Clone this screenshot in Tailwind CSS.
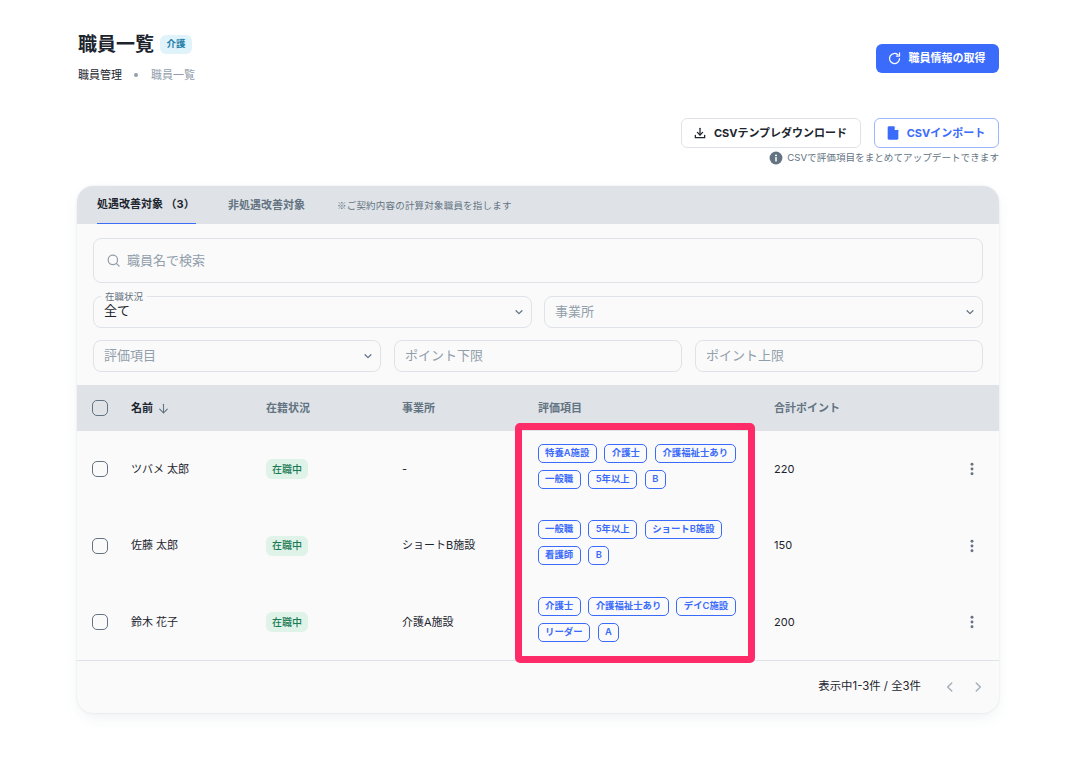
<!DOCTYPE html>
<html lang="ja">
<head>
  <meta charset="UTF-8">
  <title>職員一覧</title>
  <script src="https://cdn.jsdelivr.net/npm/@tailwindcss/browser@4"></script>
</head>
<body class="bg-white font-['Inter','Noto_Sans_CJK_JP',sans-serif] text-[#1c252e]">
  <div class="relative w-[1065px] h-[769px] overflow-hidden pl-[77px] pr-[66px] pt-[32px]">
    <!-- Header -->
    <header class="flex items-start justify-between h-[62px]">
      <div>
        <div class="flex items-center gap-[6px] h-[24px] ml-px">
          <h1 class="text-[19px] leading-[24px] pt-[2px] font-bold">職員一覧</h1>
          <span class="flex items-center justify-center w-[32px] h-[19px] rounded-[6px] bg-[#e0f3fa] text-[9.5px] font-semibold text-[#1f7fa8]">介護</span>
        </div>
        <nav class="flex items-center mt-[8px] ml-px text-[11px] leading-[22px]">
          <span class="text-[#1c252e]">職員管理</span>
          <span class="w-[4px] h-[4px] rounded-full bg-[#919eab] ml-[12px] mr-[13px]"></span>
          <span class="text-[#919eab]">職員一覧</span>
        </nav>
      </div>
      <button class="flex items-center justify-center gap-[7px] w-[123px] h-[29px] mt-[12px] pr-[3px] rounded-[6px] bg-[#3b6bfb] text-white text-[11px] font-bold">
        <svg class="w-[15px] h-[15px]" viewBox="0 0 24 24" fill="none" stroke="currentColor" stroke-width="2" stroke-linecap="round" stroke-linejoin="round"><path d="M20 12a8 8 0 1 1-2.6-5.9"/><path d="M20 3v5h-5"/></svg>
        職員情報の取得
      </button>
    </header>

    <!-- CSV actions -->
    <div class="flex justify-end gap-[13px] mt-[24px]">
      <button class="flex items-center justify-center gap-[7px] w-[180px] h-[30px] pr-[2px] rounded-[6px] border border-[#dfe3e8] bg-white text-[11px] font-bold">
        <svg class="w-[14px] h-[14px]" viewBox="0 0 24 24" fill="none" stroke="currentColor" stroke-width="2.2" stroke-linecap="round" stroke-linejoin="round"><path d="M12 4v11"/><path d="M7.5 11l4.5 4.5 4.5-4.5"/><path d="M4 16v4h16v-4"/></svg>
        CSVテンプレダウンロード
      </button>
      <button class="flex items-center justify-center gap-[6px] w-[125px] h-[30px] pr-[3px] rounded-[6px] border border-[#9db5fd] bg-white text-[11px] font-bold text-[#3b6bfb]">
        <svg class="w-[16px] h-[16px]" viewBox="0 0 24 24" fill="currentColor"><path d="M6 2h8l6 6v12a2 2 0 0 1-2 2H6a2 2 0 0 1-2-2V4a2 2 0 0 1 2-2z"/><path d="M14.5 2v5.5H20z" fill="#fff"/></svg>
        CSVインポート
      </button>
    </div>
    <div class="flex justify-end items-center gap-[4px] h-[16px] mt-[2px] text-[9.6px] text-[#637381]">
      <svg class="w-[14px] h-[14px]" viewBox="0 0 24 24"><circle cx="12" cy="12" r="11" fill="#637381"/><rect x="10.7" y="10.5" width="2.6" height="7.5" fill="#fff"/><circle cx="12" cy="7.5" r="1.7" fill="#fff"/></svg>
      CSVで評価項目をまとめてアップデートできます
    </div>

    <!-- Card -->
    <section class="w-[922px] h-[527px] mt-[20px] rounded-[16px] bg-[#fafafa] overflow-hidden shadow-[0_0_2px_rgba(145,158,171,0.25),0_6px_16px_-4px_rgba(145,158,171,0.2)]">
      <!-- Tabs -->
      <div class="flex items-center h-[38px] bg-[#dfe3e8] pl-[20px]">
        <div class="flex items-center w-[99px] h-[38px] border-b border-[#3b6bfb] text-[11px] font-bold whitespace-nowrap">処遇改善対象 （3）</div>
        <div class="ml-[32px] text-[11px] font-bold text-[#637381]">非処遇改善対象</div>
        <div class="ml-[32px] text-[9.5px] tracking-[0.2px] text-[#637381] font-['Noto_Sans_CJK_JP',sans-serif]">※ご契約内容の計算対象職員を指します</div>
      </div>

      <!-- Filters -->
      <div class="px-[16px] pt-[14px]">
        <div class="flex items-center gap-[6px] h-[45px] px-[12px] rounded-[8px] border border-[#dfe3e8] text-[13px] text-[#919eab]">
          <svg class="w-[15px] h-[15px]" viewBox="0 0 24 24" fill="none" stroke="currentColor" stroke-width="2" stroke-linecap="round"><circle cx="11" cy="11" r="7.5"/><path d="M17 17l4 4"/></svg>
          職員名で検索
        </div>
        <div class="grid grid-cols-2 gap-[12px] mt-[13px]">
          <div class="relative flex items-center justify-between h-[32px] pl-[10px] pr-[7px] rounded-[8px] border border-[#dfe3e8] text-[13px]">
            <span class="absolute left-[7px] -top-[6px] px-[4px] bg-[#fafafa] text-[9.5px] leading-[11px] text-[#637381]">在職状況</span>
            <span class="pb-[3px]">全て</span>
            <svg class="w-[10px] h-[10px] text-[#637381]" viewBox="0 0 24 24" fill="none" stroke="currentColor" stroke-width="3" stroke-linecap="round" stroke-linejoin="round"><path d="M5 9l7 7 7-7"/></svg>
          </div>
          <div class="flex items-center justify-between h-[32px] pl-[10px] pr-[7px] rounded-[8px] border border-[#dfe3e8] text-[13px] text-[#919eab]">
            事業所
            <svg class="w-[10px] h-[10px] text-[#637381]" viewBox="0 0 24 24" fill="none" stroke="currentColor" stroke-width="3" stroke-linecap="round" stroke-linejoin="round"><path d="M5 9l7 7 7-7"/></svg>
          </div>
        </div>
        <div class="grid grid-cols-3 gap-[13px] mt-[12px]">
          <div class="flex items-center justify-between h-[32px] pl-[10px] pr-[7px] rounded-[8px] border border-[#dfe3e8] text-[13px] text-[#919eab]">
            評価項目
            <svg class="w-[10px] h-[10px] text-[#637381]" viewBox="0 0 24 24" fill="none" stroke="currentColor" stroke-width="3" stroke-linecap="round" stroke-linejoin="round"><path d="M5 9l7 7 7-7"/></svg>
          </div>
          <div class="flex items-center h-[32px] pl-[10px] rounded-[8px] border border-[#dfe3e8] text-[13px] text-[#919eab]">ポイント下限</div>
          <div class="flex items-center h-[32px] pl-[10px] rounded-[8px] border border-[#dfe3e8] text-[13px] text-[#919eab]">ポイント上限</div>
        </div>
      </div>

      <!-- Table head -->
      <div class="grid grid-cols-[54px_135px_136px_136px_236px_1fr] items-center h-[46px] mt-[13px] bg-[#dfe3e8] text-[11px] font-semibold text-[#637381]">
        <div class="pl-[15px]"><span class="block w-[16px] h-[16px] rounded-[5px] border-[1.5px] border-[#637381]"></span></div>
        <div class="flex items-center gap-[4px] font-bold text-[#1c252e]">名前
          <svg class="w-[13px] h-[13px] text-[#637381]" viewBox="0 0 24 24" fill="none" stroke="currentColor" stroke-width="2" stroke-linecap="round" stroke-linejoin="round"><path d="M12 4v16"/><path d="M5 13l7 7 7-7"/></svg>
        </div>
        <div>在籍状況</div>
        <div>事業所</div>
        <div>評価項目</div>
        <div>合計ポイント</div>
      </div>

      <!-- Rows -->
      <div class="grid grid-cols-[54px_135px_136px_136px_236px_1fr] items-center h-[76px] text-[11px]">
        <div class="pl-[15px]"><span class="block w-[16px] h-[16px] rounded-[5px] border-[1.5px] border-[#637381]"></span></div>
        <div>ツバメ 太郎</div>
        <div><span class="inline-flex items-center justify-center w-[42px] h-[20px] rounded-[6px] bg-[#dff3e8] text-[10px] font-medium text-[#1b7a55]">在職中</span></div>
        <div>-</div>
        <div class="flex flex-wrap gap-x-[7.5px] gap-y-[7px] w-[205px] mb-[6px] -ml-[0.5px]">
          <span class="flex items-center h-[19px] px-[6.5px] rounded-[5px] border border-[#3b6bfb] text-[9.4px] font-semibold text-[#3b6bfb]">特養A施設</span>
          <span class="flex items-center h-[19px] px-[6.5px] rounded-[5px] border border-[#3b6bfb] text-[9.4px] font-semibold text-[#3b6bfb]">介護士</span>
          <span class="flex items-center h-[19px] px-[6.5px] rounded-[5px] border border-[#3b6bfb] text-[9.4px] font-semibold text-[#3b6bfb]">介護福祉士あり</span>
          <span class="flex items-center h-[19px] px-[6.5px] rounded-[5px] border border-[#3b6bfb] text-[9.4px] font-semibold text-[#3b6bfb]">一般職</span>
          <span class="flex items-center h-[19px] px-[6.5px] rounded-[5px] border border-[#3b6bfb] text-[9.4px] font-semibold text-[#3b6bfb]">5年以上</span>
          <span class="flex items-center h-[19px] px-[6.5px] rounded-[5px] border border-[#3b6bfb] text-[9.4px] font-semibold text-[#3b6bfb]">B</span>
        </div>
        <div class="flex items-center justify-between pr-[19px]">220
          <svg class="w-[16px] h-[16px] text-[#637381]" viewBox="0 0 24 24" fill="currentColor"><circle cx="12" cy="5" r="2.2"/><circle cx="12" cy="12" r="2.2"/><circle cx="12" cy="19" r="2.2"/></svg>
        </div>
      </div>
      <div class="grid grid-cols-[54px_135px_136px_136px_236px_1fr] items-center h-[77px] text-[11px]">
        <div class="pl-[15px]"><span class="block w-[16px] h-[16px] rounded-[5px] border-[1.5px] border-[#637381]"></span></div>
        <div>佐藤 太郎</div>
        <div><span class="inline-flex items-center justify-center w-[42px] h-[20px] rounded-[6px] bg-[#dff3e8] text-[10px] font-medium text-[#1b7a55]">在職中</span></div>
        <div>ショートB施設</div>
        <div class="flex flex-wrap gap-x-[7.5px] gap-y-[7px] w-[205px] mb-[6px] -ml-[0.5px]">
          <span class="flex items-center h-[19px] px-[6.5px] rounded-[5px] border border-[#3b6bfb] text-[9.4px] font-semibold text-[#3b6bfb]">一般職</span>
          <span class="flex items-center h-[19px] px-[6.5px] rounded-[5px] border border-[#3b6bfb] text-[9.4px] font-semibold text-[#3b6bfb]">5年以上</span>
          <span class="flex items-center h-[19px] px-[6.5px] rounded-[5px] border border-[#3b6bfb] text-[9.4px] font-semibold text-[#3b6bfb]">ショートB施設</span>
          <span class="flex items-center h-[19px] px-[6.5px] rounded-[5px] border border-[#3b6bfb] text-[9.4px] font-semibold text-[#3b6bfb]">看護師</span>
          <span class="flex items-center h-[19px] px-[6.5px] rounded-[5px] border border-[#3b6bfb] text-[9.4px] font-semibold text-[#3b6bfb]">B</span>
        </div>
        <div class="flex items-center justify-between pr-[19px]">150
          <svg class="w-[16px] h-[16px] text-[#637381]" viewBox="0 0 24 24" fill="currentColor"><circle cx="12" cy="5" r="2.2"/><circle cx="12" cy="12" r="2.2"/><circle cx="12" cy="19" r="2.2"/></svg>
        </div>
      </div>
      <div class="grid grid-cols-[54px_135px_136px_136px_236px_1fr] items-center h-[76px] text-[11px]">
        <div class="pl-[15px]"><span class="block w-[16px] h-[16px] rounded-[5px] border-[1.5px] border-[#637381]"></span></div>
        <div>鈴木 花子</div>
        <div><span class="inline-flex items-center justify-center w-[42px] h-[20px] rounded-[6px] bg-[#dff3e8] text-[10px] font-medium text-[#1b7a55]">在職中</span></div>
        <div>介護A施設</div>
        <div class="flex flex-wrap gap-x-[7.5px] gap-y-[7px] w-[205px] mb-[6px] -ml-[0.5px]">
          <span class="flex items-center h-[19px] px-[6.5px] rounded-[5px] border border-[#3b6bfb] text-[9.4px] font-semibold text-[#3b6bfb]">介護士</span>
          <span class="flex items-center h-[19px] px-[6.5px] rounded-[5px] border border-[#3b6bfb] text-[9.4px] font-semibold text-[#3b6bfb]">介護福祉士あり</span>
          <span class="flex items-center h-[19px] px-[6.5px] rounded-[5px] border border-[#3b6bfb] text-[9.4px] font-semibold text-[#3b6bfb]">デイC施設</span>
          <span class="flex items-center h-[19px] px-[6.5px] rounded-[5px] border border-[#3b6bfb] text-[9.4px] font-semibold text-[#3b6bfb]">リーダー</span>
          <span class="flex items-center h-[19px] px-[6.5px] rounded-[5px] border border-[#3b6bfb] text-[9.4px] font-semibold text-[#3b6bfb]">A</span>
        </div>
        <div class="flex items-center justify-between pr-[19px]">200
          <svg class="w-[16px] h-[16px] text-[#637381]" viewBox="0 0 24 24" fill="currentColor"><circle cx="12" cy="5" r="2.2"/><circle cx="12" cy="12" r="2.2"/><circle cx="12" cy="19" r="2.2"/></svg>
        </div>
      </div>

      <!-- Footer -->
      <div class="flex items-center justify-end h-[53px] border-t border-[#dfe3e8] pr-[14px] text-[11.4px]">
        <span>表示中1-3件 / 全3件</span>
        <svg class="w-[14px] h-[14px] ml-[22px] text-[#a5b0bb]" viewBox="0 0 24 24" fill="none" stroke="currentColor" stroke-width="2.5" stroke-linecap="round" stroke-linejoin="round"><path d="M15 5l-7 7 7 7"/></svg>
        <svg class="w-[14px] h-[14px] ml-[14px] text-[#a5b0bb]" viewBox="0 0 24 24" fill="none" stroke="currentColor" stroke-width="2.5" stroke-linecap="round" stroke-linejoin="round"><path d="M9 5l7 7-7 7"/></svg>
      </div>
    </section>

    <!-- Highlight annotation -->
    <div class="absolute left-[515px] top-[423px] w-[240px] h-[240px] rounded-[5px] border-[7px] border-[#ff2a68]"></div>
  </div>
</body>
</html>
